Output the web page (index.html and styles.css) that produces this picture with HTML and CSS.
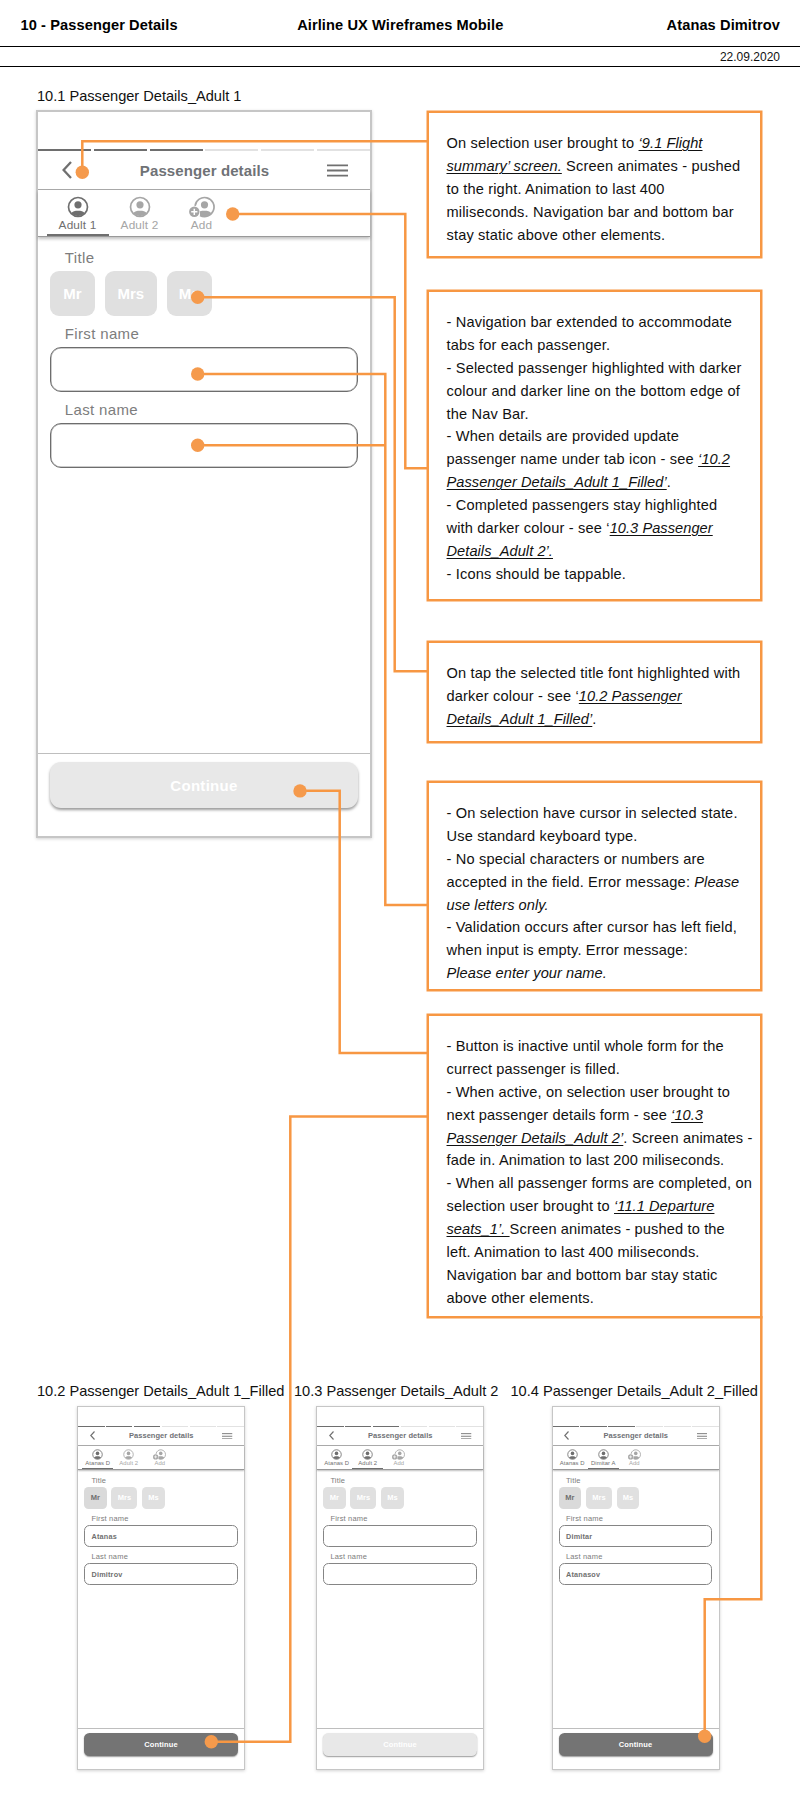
FILE: index.html
```
<!DOCTYPE html>
<html lang="en">
<head>
<meta charset="utf-8">
<title>10 - Passenger Details</title>
<link rel="stylesheet" href="styles.css">
</head>
<body>
<svg class="defs" aria-hidden="true">
  <symbol id="back" viewBox="0 0 10 18"><path d="M9 1 1.6 9 9 17" fill="none" stroke="currentColor" stroke-width="2.3"/></symbol>
  <symbol id="menu" viewBox="0 0 21 13"><path d="M0 1.3h21M0 6.5h21M0 11.7h21" fill="none" stroke="currentColor" stroke-width="1.8"/></symbol>
  <symbol id="person" viewBox="0 0 26 22">
    <circle cx="13" cy="11" r="9.5" fill="none" stroke="currentColor" stroke-width="1.7"/>
    <circle cx="13" cy="8.8" r="3.6" fill="currentColor"/>
    <path d="M6.2 17.3C7.6 15.3 10 14.7 13 14.7s5.400.6 6.800 2.600A9.500 9.500 0 0 1 6.200 17.300z" fill="currentColor"/>
  </symbol>
  <symbol id="person-add" viewBox="0 0 26 22">
    <path d="M6.100 9.800A9.500 9.500 0 1 1 11 19.400" fill="none" stroke="currentColor" stroke-width="1.700"/>
    <circle cx="15.500" cy="8.800" r="3.600" fill="currentColor"/>
    <path d="M11 15.200C12.300 14.800 13.800 14.700 15.500 14.700c3 0 5.400.6 6.800 2.600A9.500 9.500 0 0 1 11 19.400z" fill="currentColor"/>
    <circle cx="5.300" cy="15.800" r="5.200" fill="currentColor"/>
    <path d="M5.300 12.700v6.200M2.200 15.800h6.200" stroke="#fff" stroke-width="1.500"/>
  </symbol>
</svg>

<header class="top">
  <span class="top-left">10 - Passenger Details</span>
  <span class="top-mid">Airline UX Wireframes Mobile</span>
  <span class="top-right">Atanas Dimitrov</span>
</header>
<div class="date">22.09.2020</div>

<main>
  <section class="overview">
    <figure class="screen">
      <figcaption>10.1 Passenger Details_Adult 1</figcaption>
      <div class="phone large">
        <div class="status"></div>
        <div class="progress"><i class="done"></i><i class="done"></i><i class="done"></i><i></i><i></i><i></i></div>
        <div class="nav"><svg class="i-back"><use href="#back"/></svg><b>Passenger details</b><svg class="i-menu"><use href="#menu"/></svg></div>
        <div class="tabs">
          <div class="tab on current"><svg><use href="#person"/></svg><span>Adult 1</span></div>
          <div class="tab"><svg><use href="#person"/></svg><span>Adult 2</span></div>
          <div class="tab"><svg><use href="#person-add"/></svg><span>Add</span></div>
        </div>
        <div class="form">
          <label>Title</label>
          <div class="chips"><span class="chip">Mr</span><span class="chip wide">Mrs</span><span class="chip">Ms</span></div>
          <label>First name</label><div class="field"></div>
          <label>Last name</label><div class="field"></div>
        </div>
        <div class="foot"><div class="button">Continue</div></div>
      </div>
    </figure>

    <div class="notes">
      <p class="note n1">On selection user brought to <a>‘9.1 Flight<br>summary’ screen.</a> Screen animates - pushed<br>to the right. Animation to last 400<br>miliseconds. Navigation bar and bottom bar<br>stay static above other elements.</p>
      <p class="note n2">- Navigation bar extended to accommodate<br>tabs for each passenger.<br>- Selected passenger highlighted with darker<br>colour and darker line on the bottom edge of<br>the Nav Bar.<br>- When details are provided update<br>passenger name under tab icon - see <a>‘10.2<br>Passenger Details_Adult 1_Filled’</a>.<br>- Completed passengers stay highlighted<br>with darker colour - see ‘<a>10.3 Passenger<br>Details_Adult 2’.</a><br>- Icons should be tappable.</p>
      <p class="note n3">On tap the selected title font highlighted with<br>darker colour - see ‘<a>10.2 Passenger<br>Details_Adult 1_Filled’</a>.</p>
      <p class="note n4">- On selection have cursor in selected state.<br>Use standard keyboard type.<br>- No special characters or numbers are<br>accepted in the field. Error message: <em>Please<br>use letters only.</em><br>- Validation occurs after cursor has left field,<br>when input is empty. Error message:<br><em>Please enter your name.</em></p>
      <p class="note n5">- Button is inactive until whole form for the<br>currect passenger is filled.<br>- When active, on selection user brought to<br>next passenger details form - see <a>‘10.3<br>Passenger Details_Adult 2’</a>. Screen animates -<br>fade in. Animation to last 200 miliseconds.<br>- When all passenger forms are completed, on<br>selection user brought to <a>‘11.1 Departure<br>seats_1’. </a>Screen animates - pushed to the<br>left. Animation to last 400 miliseconds.<br>Navigation bar and bottom bar stay static<br>above other elements.</p>
    </div>
  </section>

  <section class="states">
    <figure class="screen s2">
      <figcaption>10.2 Passenger Details_Adult 1_Filled</figcaption>
      <div class="phone small">
        <div class="status"></div>
        <div class="progress"><i class="done"></i><i class="done"></i><i class="done"></i><i></i><i></i><i></i></div>
        <div class="nav"><svg class="i-back"><use href="#back"/></svg><b>Passenger details</b><svg class="i-menu"><use href="#menu"/></svg></div>
        <div class="tabs">
          <div class="tab on current"><svg><use href="#person"/></svg><span>Atanas D</span></div>
          <div class="tab"><svg><use href="#person"/></svg><span>Adult 2</span></div>
          <div class="tab"><svg><use href="#person-add"/></svg><span>Add</span></div>
        </div>
        <div class="form">
          <label>Title</label>
          <div class="chips"><span class="chip picked">Mr</span><span class="chip wide">Mrs</span><span class="chip">Ms</span></div>
          <label>First name</label><div class="field">Atanas</div>
          <label>Last name</label><div class="field">Dimitrov</div>
        </div>
        <div class="foot"><div class="button active">Continue</div></div>
      </div>
    </figure>
    <figure class="screen s3">
      <figcaption>10.3 Passenger Details_Adult 2</figcaption>
      <div class="phone small">
        <div class="status"></div>
        <div class="progress"><i class="done"></i><i class="done"></i><i class="done"></i><i></i><i></i><i></i></div>
        <div class="nav"><svg class="i-back"><use href="#back"/></svg><b>Passenger details</b><svg class="i-menu"><use href="#menu"/></svg></div>
        <div class="tabs">
          <div class="tab on"><svg><use href="#person"/></svg><span>Atanas D</span></div>
          <div class="tab on current"><svg><use href="#person"/></svg><span>Adult 2</span></div>
          <div class="tab"><svg><use href="#person-add"/></svg><span>Add</span></div>
        </div>
        <div class="form">
          <label>Title</label>
          <div class="chips"><span class="chip">Mr</span><span class="chip wide">Mrs</span><span class="chip">Ms</span></div>
          <label>First name</label><div class="field"></div>
          <label>Last name</label><div class="field"></div>
        </div>
        <div class="foot"><div class="button">Continue</div></div>
      </div>
    </figure>
    <figure class="screen s4">
      <figcaption>10.4 Passenger Details_Adult 2_Filled</figcaption>
      <div class="phone small">
        <div class="status"></div>
        <div class="progress"><i class="done"></i><i class="done"></i><i class="done"></i><i></i><i></i><i></i></div>
        <div class="nav"><svg class="i-back"><use href="#back"/></svg><b>Passenger details</b><svg class="i-menu"><use href="#menu"/></svg></div>
        <div class="tabs">
          <div class="tab on"><svg><use href="#person"/></svg><span>Atanas D</span></div>
          <div class="tab on current"><svg><use href="#person"/></svg><span>Dimitar A</span></div>
          <div class="tab"><svg><use href="#person-add"/></svg><span>Add</span></div>
        </div>
        <div class="form">
          <label>Title</label>
          <div class="chips"><span class="chip picked">Mr</span><span class="chip wide">Mrs</span><span class="chip">Ms</span></div>
          <label>First name</label><div class="field">Dimitar</div>
          <label>Last name</label><div class="field">Atanasov</div>
        </div>
        <div class="foot"><div class="button active">Continue</div></div>
      </div>
    </figure>
  </section>
</main>

<!-- Callout lines from controls to their notes -->
<svg class="wires" viewBox="0 0 800 1810" width="800" height="1810">
  <g fill="none" stroke="#f79743" stroke-width="2.500">
    <path d="M82.300 172V141.300H428"/>
    <path d="M232.700 214H405.300V468.200H428"/>
    <path d="M197.700 297.300H394.700V671.200H428"/>
    <path d="M197.700 374H385.300V905H428"/>
    <path d="M197.700 445.300H385.300"/>
    <path d="M300 790.700H339.700V1053H428"/>
    <path d="M211.300 1741.700H290.300V1116.500H428"/>
    <path d="M761.300 1316V1599.200H704.700V1736"/>
  </g>
  <g fill="#f59a4c">
    <circle cx="82.300" cy="172.300" r="6.700"/>
    <circle cx="232.700" cy="214" r="6.700"/>
    <circle cx="197.700" cy="297.300" r="6.700"/>
    <circle cx="197.700" cy="374" r="6.700"/>
    <circle cx="197.700" cy="445.300" r="6.700"/>
    <circle cx="300" cy="790.900" r="6.700"/>
    <circle cx="211.300" cy="1741.700" r="6.700"/>
    <circle cx="704.700" cy="1736.200" r="6.700"/>
  </g>
</svg>
</body>
</html>
```
FILE: styles.css
```
* { box-sizing: border-box; }
body {
  position: relative;
  margin: 0;
  width: 800px;
  height: 1810px;
  overflow: hidden;
  background: #fff;
  color: #111;
  font-family: "Liberation Sans", Arial, sans-serif;
}
.defs { display: block; width: 0; height: 0; }
figure, p { margin: 0; }

.top {
  display: grid;
  grid-template-columns: 1fr auto 1fr;
  height: 47px;
  padding: 0 20px 0 20.500px;
  border-bottom: 1px solid #000;
  color: #000;
  font-size: 14.6px;
  font-weight: bold;
  letter-spacing: .1px;
  line-height: 50px;
  white-space: nowrap;
}
.top-right { text-align: right; }
.date {
  height: 20px;
  padding-right: 20px;
  border-bottom: 1px solid #000;
  font-size: 12px;
  line-height: 20px;
  text-align: right;
}

.overview {
  display: flex;
  align-items: flex-start;
  gap: 54px;
  padding: 19px 0 0 37px;
}
.overview .screen { width: 336px; }
figcaption {
  height: 24px;
  font-size: 14.6px;
  line-height: 21px;
  white-space: nowrap;
}

/* Every length inside a phone is a multiple of --u, so the small ones are half size */
.phone {
  --u: 1px;
  display: flex;
  flex-direction: column;
  width: calc(336 * var(--u));
  height: calc(728 * var(--u));
  border: calc(2 * var(--u)) solid #c6c6c6;
  box-shadow: 0 1px 3px rgba(0, 0, 0, .18);
  color: #707070;
}
.large { margin-left: -1px; }
.small { --u: .5px; }
.status { height: calc(37 * var(--u)); }
.progress {
  display: grid;
  grid-template-columns: repeat(6, 1fr);
  gap: calc(2.8 * var(--u));
  height: calc(2 * var(--u));
}
.progress i { background: #e2e2e2; }
.progress .done { background: #6e6e6e; }
.nav {
  display: flex;
  align-items: center;
  justify-content: space-between;
  height: calc(39 * var(--u));
  padding: 0 calc(22.500 * var(--u)) 0 calc(23.500 * var(--u));
  border-bottom: 1px solid #aaa;
}
.nav b {
  color: #6f7276;
  font-size: calc(15 * var(--u));
  letter-spacing: calc(.1 * var(--u));
}
.i-back { width: calc(10 * var(--u)); height: calc(18 * var(--u)); margin-right: calc(11 * var(--u)); }
.i-menu { width: calc(21 * var(--u)); height: calc(13 * var(--u)); }
.tabs {
  display: flex;
  height: calc(47 * var(--u));
  padding-left: calc(8.500 * var(--u));
  border-bottom: max(1px, calc(1.500 * var(--u))) solid #999;
  box-shadow: 0 calc(2 * var(--u)) calc(3 * var(--u)) rgba(0, 0, 0, .25);
}
.tab {
  display: flex;
  flex-direction: column;
  align-items: center;
  width: calc(62 * var(--u));
  padding-top: calc(6 * var(--u));
  color: #a6a6a6;
  border-bottom: calc(2 * var(--u)) solid transparent;
}
.tab svg { width: calc(26 * var(--u)); height: calc(22 * var(--u)); flex: none; }
.tab span {
  font-size: calc(11.800 * var(--u));
  line-height: calc(14 * var(--u));
  letter-spacing: calc(.15 * var(--u));
  white-space: nowrap;
}
.on { color: #6f6f6f; }
.current { border-bottom-color: #6f6f6f; }
.form { padding: calc(3 * var(--u)) calc(12.500 * var(--u)) 0 calc(12 * var(--u)); }
.form label {
  display: block;
  height: calc(18 * var(--u));
  margin: calc(9 * var(--u)) 0 calc(4 * var(--u)) calc(14.800 * var(--u));
  color: #7d7d7d;
  font-size: calc(15 * var(--u));
  line-height: calc(18 * var(--u));
  letter-spacing: calc(.35 * var(--u));
}
.chips { display: flex; gap: calc(9.800 * var(--u)); }
.chip {
  display: flex;
  align-items: center;
  justify-content: center;
  width: calc(45 * var(--u));
  height: calc(45 * var(--u));
  border-radius: calc(9 * var(--u));
  background: #e0e0e0;
  color: #fff;
  font-size: calc(15 * var(--u));
  font-weight: bold;
}
.wide { width: calc(52 * var(--u)); }
.picked { background: #dadada; color: #707070; }
.field {
  height: calc(45 * var(--u));
  padding-left: calc(13 * var(--u));
  border: max(1px, calc(1.500 * var(--u))) solid #6d6d6d;
  border-radius: calc(11 * var(--u));
  font-size: calc(14.500 * var(--u));
  font-weight: bold;
  line-height: calc(43 * var(--u));
  letter-spacing: calc(.4 * var(--u));
}
.large .field { box-shadow: inset 0 0 0 .5px #999; }
.small .field { border-color: #858585; }
.foot {
  height: calc(83 * var(--u));
  margin-top: auto;
  padding: calc(8 * var(--u)) calc(12 * var(--u)) 0 calc(12 * var(--u));
  border-top: 1px solid #bebebe;
}
.button {
  height: calc(46 * var(--u));
  border-radius: calc(11 * var(--u));
  background: #e8e8e8;
  box-shadow: 0 calc(2 * var(--u)) calc(3 * var(--u)) rgba(0, 0, 0, .4);
  color: #fff;
  font-size: calc(15 * var(--u));
  font-weight: bold;
  line-height: calc(47 * var(--u));
  letter-spacing: calc(.3 * var(--u));
  text-align: center;
}
.active { background: #747474; }

.notes { padding-top: 25px; }
.note {
  width: 335px;
  padding: 19px 0 0 17.500px;
  border: 2px solid #f79743;
  box-shadow: 0 0 0 .5px #f79743;
  font-size: 14.6px;
  line-height: 22.870px;
  letter-spacing: .16px;
  white-space: nowrap;
}
.note a, .note em { font-style: italic; letter-spacing: .06px; }
.note a { text-decoration: underline; text-decoration-thickness: 1px; text-underline-offset: 2px; }
.n1 { height: 147px; margin-bottom: 32px; }
.n2 { height: 311px; margin-bottom: 40px; }
.n3 { height: 102px; margin-bottom: 38px; }
.n4 { height: 210px; margin-bottom: 23px; }
.n5 { height: 304px; letter-spacing: .14px; }

.states { display: flex; padding: 62.500px 0 0 37px; }
.states figcaption { height: 25.500px; }
.s2 { width: 257px; }
.s2 .phone { margin-left: 40px; }
.s3 { width: 216.500px; }
.s3 .phone { margin-left: 22px; }
.s4 .phone { margin-left: 41px; }

.wires { position: absolute; left: 0; top: 0; }
```
